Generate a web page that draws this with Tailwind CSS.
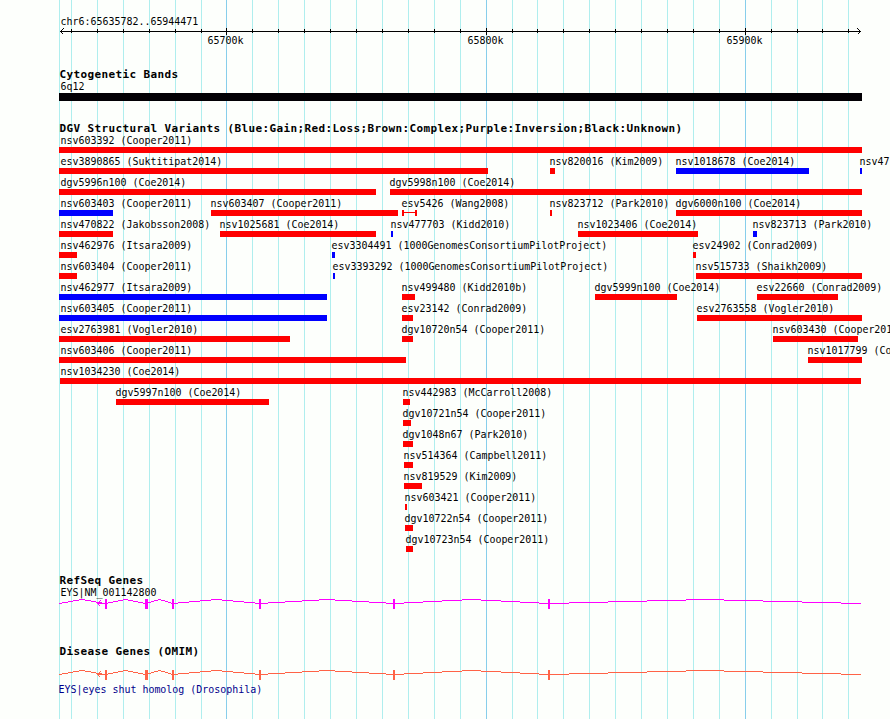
<!DOCTYPE html>
<html lang="en">
<head>
<meta charset="utf-8">
<title>Genome browser: chr6:65635782..65944471</title>
<script src="https://cdn.jsdelivr.net/npm/@tailwindcss/browser@4"></script>
</head>
<body class="bg-[#fdfffc]">
<main class="relative w-[890px] h-[719px] overflow-hidden bg-[#fdfffc] font-['DejaVu_Sans_Mono','Liberation_Mono',monospace] text-[9.967px] leading-[12px] text-black">
  <svg id="grid" class="absolute inset-0" width="890" height="719" shape-rendering="crispEdges" aria-hidden="true"></svg>

  <div class="relative flex flex-col">
    <header class="flex flex-col h-[69px] pt-[16px]">
      <div class="pl-[60.5px] h-[12px] whitespace-pre">chr6:65635782..65944471</div>
      <svg id="ruler" class="block shrink-0" width="890" height="7" viewBox="0 28 890 7" shape-rendering="crispEdges"></svg>
      <div class="flex pl-[207.5px] whitespace-pre">
        <span class="w-[260px]">65700k</span><span class="w-[259px]">65800k</span><span>65900k</span>
      </div>
    </header>

    <section class="h-[54px]">
      <h2 class="pl-[59.5px] h-[12px] font-bold text-[11px] tracking-[0.378px] whitespace-pre">Cytogenetic Bands</h2>
      <div class="pl-[60.5px] h-[12px]">6q12</div>
      <div class="ml-[59px] w-[803px] h-[8px] bg-[#020004]"></div>
    </section>

    <section class="h-[452px]">
      <h2 class="pl-[59.5px] h-[12px] font-bold text-[11px] tracking-[0.378px] whitespace-pre">DGV Structural Variants (Blue:Gain;Red:Loss;Brown:Complex;Purple:Inversion;Black:Unknown)</h2>
      <div id="variants" class="flex flex-col"></div>
    </section>

    <section class="h-[71px]">
      <h2 class="pl-[59.5px] h-[12px] font-bold text-[11px] tracking-[0.378px] whitespace-pre">RefSeq Genes</h2>
      <div class="pl-[60.5px] h-[12px]">EYS|NM_001142800</div>
      <svg class="gene block text-[#ff00ff]" width="890" height="10" viewBox="0 599 890 10" shape-rendering="crispEdges"></svg>
    </section>

    <section>
      <h2 class="pl-[59.5px] h-[24px] font-bold text-[11px] tracking-[0.378px] whitespace-pre">Disease Genes (OMIM)</h2>
      <svg class="gene block text-[#ff6347]" width="890" height="10" viewBox="0 599 890 10" shape-rendering="crispEdges"></svg>
      <div class="pl-[58.5px] pt-[4px] text-[#00008b]">EYS|eyes shut homolog (Drosophila)</div>
    </section>
  </div>
</main>

<script>
const minor = [59,71,97,123,149,175,201,252,278,304,330,356,382,408,434,460,512,537,563,589,615,641,667,693,719,771,797,822,848];
const major = [226,486,745];
const rect = (x, y, w, h, c) => `<rect x="${x}" y="${y}" width="${w}" height="${h}" fill="${c}"/>`;

document.getElementById('grid').innerHTML =
  minor.map(x => rect(x, 0, 1, 719, '#afeeee')).join('') +
  major.map(x => rect(x, 0, 1, 719, '#87ceeb')).join('');

document.getElementById('ruler').innerHTML =
  rect(60, 31, 801, 1, '#000') +
  minor.slice(1).map(x => rect(x, 29, 1, 4, '#000')).join('') +
  major.map(x => rect(x, 28, 1, 7, '#000')).join('') +
  '<path d="M63.5 28.5 60.5 31.5 63.5 34.5M857.5 28.5 860.5 31.5 857.5 34.5" fill="none" stroke="#000"/>';

// [label, start, end, kind]; kind: r = loss, b = gain, s = spanning pair
const rows = [
  [['nsv603392 (Cooper2011)',59,862,'r']],
  [['esv3890865 (Suktitipat2014)',59,488,'r'],['nsv820016 (Kim2009)',550,555,'r'],['nsv1018678 (Coe2014)',676,809,'b'],['nsv47',860,862,'b']],
  [['dgv5996n100 (Coe2014)',59,376,'r'],['dgv5998n100 (Coe2014)',390,862,'r']],
  [['nsv603403 (Cooper2011)',59,113,'b'],['nsv603407 (Cooper2011)',211,398,'r'],['esv5426 (Wang2008)',402,417,'s'],['nsv823712 (Park2010)',550,552,'r'],['dgv6000n100 (Coe2014)',676,862,'r']],
  [['nsv470822 (Jakobsson2008)',59,113,'r'],['nsv1025681 (Coe2014)',220,376,'r'],['nsv477703 (Kidd2010)',391,393,'b'],['nsv1023406 (Coe2014)',578,698,'r'],['nsv823713 (Park2010)',753,757,'b']],
  [['nsv462976 (Itsara2009)',59,77,'r'],['esv3304491 (1000GenomesConsortiumPilotProject)',332,335,'b'],['esv24902 (Conrad2009)',693,696,'r']],
  [['nsv603404 (Cooper2011)',59,77,'r'],['esv3393292 (1000GenomesConsortiumPilotProject)',333,335,'b'],['nsv515733 (Shaikh2009)',696,862,'r']],
  [['nsv462977 (Itsara2009)',59,327,'b'],['nsv499480 (Kidd2010b)',402,415,'r'],['dgv5999n100 (Coe2014)',595,677,'r'],['esv22660 (Conrad2009)',757,838,'r']],
  [['nsv603405 (Cooper2011)',59,327,'b'],['esv23142 (Conrad2009)',402,413,'r'],['esv2763558 (Vogler2010)',697,862,'r']],
  [['esv2763981 (Vogler2010)',59,290,'r'],['dgv10720n54 (Cooper2011)',402,413,'r'],['nsv603430 (Cooper2011)',773,858,'r']],
  [['nsv603406 (Cooper2011)',59,406,'r'],['nsv1017799 (Coe2014)',808,862,'r']],
  [['nsv1034230 (Coe2014)',60,861,'r']],
  [['dgv5997n100 (Coe2014)',116,269,'r'],['nsv442983 (McCarroll2008)',403,410,'r']],
  [['dgv10721n54 (Cooper2011)',403,411,'r']],
  [['dgv1048n67 (Park2010)',403,413,'r']],
  [['nsv514364 (Campbell2011)',404,413,'r']],
  [['nsv819529 (Kim2009)',404,422,'r']],
  [['nsv603421 (Cooper2011)',405,407,'r']],
  [['dgv10722n54 (Cooper2011)',405,413,'r']],
  [['dgv10723n54 (Cooper2011)',406,413,'r']],
];
const bars = {
  r: '<div class="h-[6px] bg-[#ff0000]"></div>',
  b: '<div class="h-[6px] bg-[#0000ff]"></div>',
  s: '<div class="h-[6px] border-x-2 border-[#ff0000] pt-[2px]"><div class="h-px bg-[#ff0000]"></div></div>',
};
document.getElementById('variants').innerHTML = rows.map(row => {
  let end = 0;
  return '<div class="flex h-[21px]">' + row.map(([label, a, b, kind]) => {
    const gap = a - end;
    end = b;
    const shift = a === 59 ? 1.5 : a === 60 ? 0.5 : -0.5;
    return `<div class="shrink-0" style="margin-left:${gap}px;width:${b - a}px"><div class="h-[12px] whitespace-pre" style="margin-left:${shift}px">${label}</div>${bars[kind]}</div>`;
  }).join('') + '</div>';
}).join('');

const exons = [[105,2],[145,3],[172,2],[259,2],[393,2],[548,2]];
const introns = [[59,105],[105,146],[146,173],[173,260],[260,394],[394,549],[549,861]];
// Each intron is a shallow 4px hat, drawn as horizontal one-pixel steps.
const hat = ([a, b]) => {
  const mid = (a + b) / 2, half = (b - a) / 2;
  let out = '', start = a, prev = null;
  for (let x = a; x <= b; x++) {
    const y = x === b ? null : 599 + Math.round(4 * Math.abs(x + 0.5 - mid) / half);
    if (y !== prev) {
      if (prev !== null) out += rect(start, prev, x - start, 1, 'currentColor');
      start = x;
      prev = y;
    }
  }
  return out;
};
document.querySelectorAll('.gene').forEach(el => {
  el.innerHTML =
    introns.map(hat).join('') +
    exons.map(([x, w]) => rect(x, 599, w, 10, 'currentColor')).join('') +
    '<path d="M105 603.5H97.5M100.5 600.5 97.5 603.5 100.5 606.5" fill="none" stroke="currentColor"/>';
});
</script>
</body>
</html>
